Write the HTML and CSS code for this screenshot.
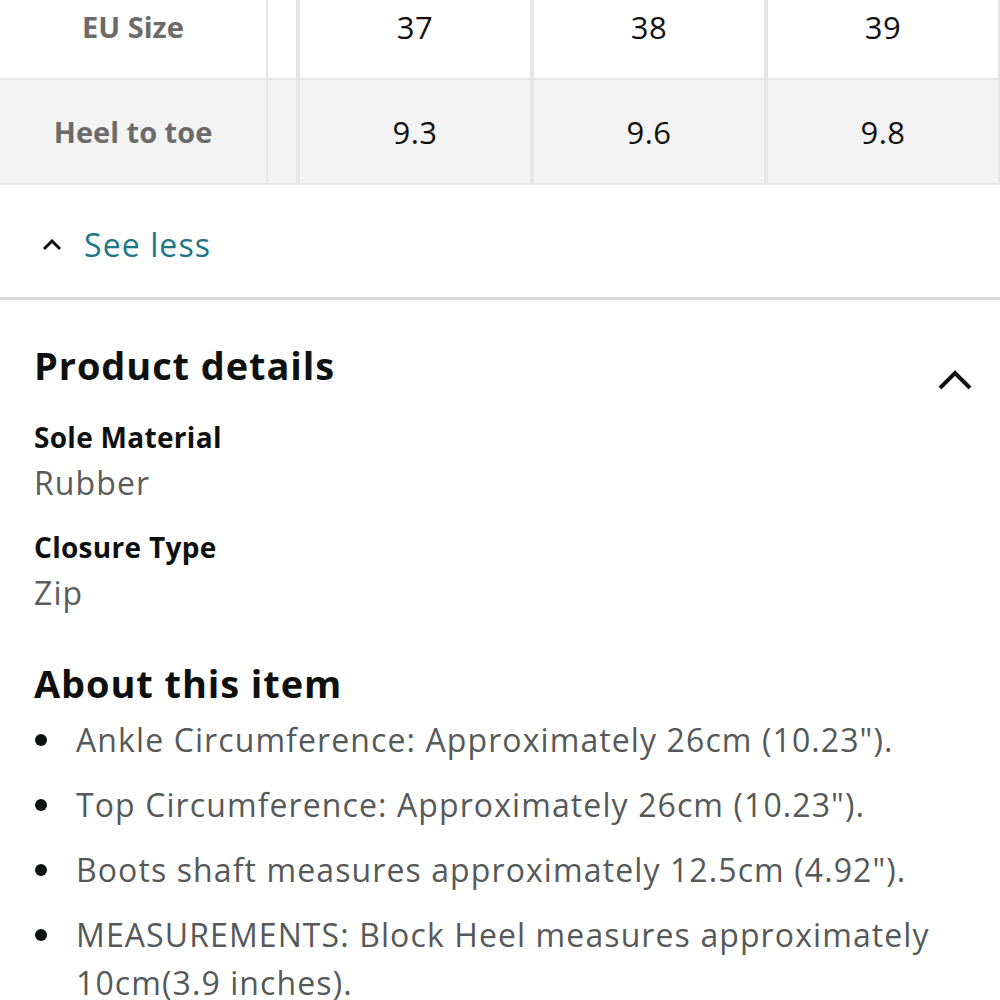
FILE: index.html
```html
<!DOCTYPE html>
<html lang="en">
<head>
<meta charset="utf-8">
<title>Product details</title>
<link rel="stylesheet" href="styles.css">
</head>
<body>
<div class="size-table">
  <div class="row">
    <div class="cell label">EU Size</div>
    <div class="cell spacer"></div>
    <div class="cell value">37</div>
    <div class="cell value">38</div>
    <div class="cell value last">39</div>
  </div>
  <div class="row shaded">
    <div class="cell label">Heel to toe</div>
    <div class="cell spacer"></div>
    <div class="cell value">9.3</div>
    <div class="cell value">9.6</div>
    <div class="cell value last">9.8</div>
  </div>
</div>

<div class="see-less">
  <svg class="chev-small" viewBox="0 0 20 12" width="20" height="12" aria-hidden="true"><path d="M2 10 L10 2 L18 10" fill="none" stroke="#111" stroke-width="3"/></svg>
  <span class="link">See less</span>
</div>

<div class="details">
  <div class="details-head">
    <h2 class="heading">Product details</h2>
    <svg class="chev-big" viewBox="0 0 34 22" width="34" height="22" aria-hidden="true"><path d="M2 19 L17 4 L32 19" fill="none" stroke="#111" stroke-width="4"/></svg>
  </div>
  <div class="attr first">
    <div class="attr-name">Sole Material</div>
    <div class="attr-value">Rubber</div>
  </div>
  <div class="attr">
    <div class="attr-name">Closure Type</div>
    <div class="attr-value">Zip</div>
  </div>

  <h2 class="heading about">About this item</h2>
  <ul class="bullets">
    <li>Ankle Circumference: Approximately 26cm (10.23").</li>
    <li>Top Circumference: Approximately 26cm (10.23").</li>
    <li>Boots shaft measures approximately 12.5cm (4.92").</li>
    <li>MEASUREMENTS: Block Heel measures approximately 10cm(3.9 inches).</li>
  </ul>
</div>
</body>
</html>
```
FILE: styles.css
```css
html, body {
  margin: 0;
  padding: 0;
  background: #fff;
}
body {
  font-family: "Open Sans", "Noto Sans", "Liberation Sans", sans-serif;
  color: #0f1111;
  width: 1000px;
  height: 1000px;
  overflow: hidden;
}

/* size table */
.size-table {
  margin-top: -25px;
  border-bottom: 2px solid #e6e6e6;
  width: 1000px;
}
.row {
  display: flex;
  height: 103px;
  border-bottom: 2px solid #e6e6e6;
}
.row:last-child { border-bottom: none; }
.row.shaded { background: #f3f3f3; }
.cell {
  display: flex;
  align-items: center;
  justify-content: center;
  font-size: 31px;
}
.label {
  width: 266px;
  border-right: 2px solid #e6e6e6;
  color: #6b6b6b;
  font-weight: 700;
  font-size: 29px;
}
.spacer {
  width: 28px;
  border-right: 4px solid #e6e6e6;
}
.value {
  width: 230px;
  border-right: 4px solid #e6e6e6;
  color: #111;
  letter-spacing: 0.5px;
}
.value.last { border-right: 2px solid #e6e6e6; }

/* see less */
.see-less {
  display: flex;
  align-items: center;
  box-sizing: border-box;
  height: 115px;
  padding: 7px 0 0 42px;
  gap: 22px;
  border-bottom: 3px solid #d8d8d8;
}
.chev-small { flex: none; }
.link {
  color: #1a7888;
  font-size: 32px;
  letter-spacing: 1.1px;
}

/* details */
.details {
  padding: 0 28px 0 34px;
}
.details-head {
  display: flex;
  align-items: flex-start;
  justify-content: space-between;
  margin-top: 41px;
}
.chev-big { flex: none; margin-top: 28px; }
.heading {
  margin: 0;
  font-size: 38px;
  line-height: 48px;
  font-weight: 700;
  color: #0f1111;
  letter-spacing: 0.9px;
}
.attr.first { margin-top: 28px; }
.attr + .attr { margin-top: 18px; }
.attr-name {
  font-size: 28px;
  font-weight: 700;
  line-height: 36px;
  color: #0f1111;
  letter-spacing: 0.3px;
}
.attr-value {
  font-size: 32px;
  line-height: 56px;
  color: #5a5c5c;
  letter-spacing: 1.1px;
}
.about { margin-top: 38px; }
.bullets {
  list-style: none;
  margin: 9px 0 0 0;
  padding: 0;
}
.bullets li {
  position: relative;
  padding-left: 42px;
  font-size: 32px;
  line-height: 48px;
  color: #565959;
  letter-spacing: 1.1px;
  margin-bottom: 17px;
}
.bullets li::before {
  content: "";
  position: absolute;
  left: 1px;
  top: 18px;
  width: 12px;
  height: 12px;
  border-radius: 50%;
  background: #0f1111;
}
```
